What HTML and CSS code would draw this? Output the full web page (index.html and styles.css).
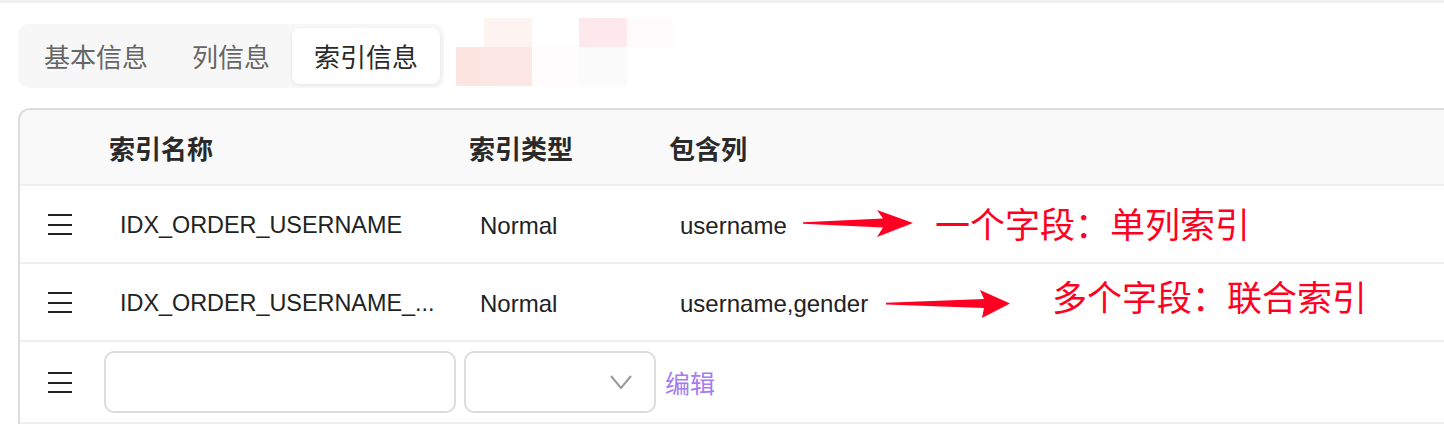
FILE: index.html
```html
<!DOCTYPE html>
<html lang="zh">
<head>
<meta charset="utf-8">
<title>索引信息</title>
<link rel="stylesheet" href="styles.css">
</head>
<body>
<div class="page">
  <div class="topline"></div>
  <div class="topbar">
    <div class="tabs">
      <div class="tab">基本信息</div>
      <div class="tab">列信息</div>
      <div class="tab active">索引信息</div>
    </div>
    <div class="mosaic">
      <span></span><span class="m1"></span><span></span><span class="m2"></span><span class="m3"></span>
      <span class="m4"></span><span class="m5"></span><span class="m6"></span><span class="m7"></span><span></span>
    </div>
  </div>

  <div class="table">
    <div class="row head">
      <div class="cell"></div>
      <div class="cell th">索引名称</div>
      <div class="cell th">索引类型</div>
      <div class="cell th">包含列</div>
    </div>
    <div class="row">
      <div class="cell handle"><svg class="menu" width="24" height="21" viewBox="0 0 24 21"><path d="M0 1h24M0 11h24M0 20h24" stroke="#222" stroke-width="2"/></svg></div>
      <div class="cell td name">IDX_ORDER_USERNAME</div>
      <div class="cell td">Normal</div>
      <div class="cell td">username</div>
    </div>
    <div class="row">
      <div class="cell handle"><svg class="menu" width="24" height="21" viewBox="0 0 24 21"><path d="M0 1h24M0 11h24M0 20h24" stroke="#222" stroke-width="2"/></svg></div>
      <div class="cell td name">IDX_ORDER_USERNAME_...</div>
      <div class="cell td">Normal</div>
      <div class="cell td">username,gender</div>
    </div>
    <div class="row edit">
      <div class="cell handle"><svg class="menu" width="24" height="21" viewBox="0 0 24 21"><path d="M0 1h24M0 11h24M0 20h24" stroke="#222" stroke-width="2"/></svg></div>
      <div class="cell field"><div class="input"></div></div>
      <div class="cell field"><div class="input select"><svg width="22" height="14" viewBox="0 0 22 14"><path d="M1 1l10 12 10-12" fill="none" stroke="#9a9a9a" stroke-width="2"/></svg></div></div>
      <div class="cell action"><span class="link">编辑</span></div>
    </div>
  </div>

  <svg class="arrow a1" width="112" height="32" viewBox="0 0 112 32"><polygon points="0,14.2 80,10.5 74,2 110,15 74,29 80,19.5 0,15.8" fill="#ff0022"/></svg>
  <div class="note n1">一个字段：单列索引</div>
  <svg class="arrow a2" width="126" height="32" viewBox="0 0 126 32"><polygon points="0,14.8 98,11 94,2 124,15.5 96,30 98,20 0,16.4" fill="#ff0022"/></svg>
  <div class="note n2">多个字段：联合索引</div>
</div>
</body>
</html>
```
FILE: styles.css
```css
html, body {
  margin: 0;
  padding: 0;
  overflow: hidden;
  background: #fff;
}

.page {
  position: relative;
  height: 436px;
  font-family: "Liberation Sans", "Noto Sans CJK SC", sans-serif;
}

.topline {
  height: 3px;
  background: #f1f1f1;
}

.topbar {
  display: flex;
  align-items: flex-start;
  padding: 15px 0 0 18px;
}

.tabs {
  display: flex;
  margin-top: 6px;
  padding: 4px;
  background: #f7f7f7;
  border-radius: 10px;
}

.tab {
  height: 56px;
  line-height: 56px;
  padding: 0 22px;
  font-family: "Noto Sans CJK SC", sans-serif;
  font-size: 26px;
  color: #666;
}

.tab.active {
  background: #fff;
  color: #2a2a2a;
  border-radius: 8px;
  box-shadow: 0 1px 4px rgba(0, 0, 0, 0.08);
}

.mosaic {
  display: grid;
  grid-template-columns: 28px 48px 47px 48px 47px;
  grid-template-rows: 29px 39px;
  margin-left: 12px;
}

.m1 { background: #fdf3f1; }
.m2 { background: #fde8ec; }
.m3 { background: #fffafb; }
.m4 { background: #fde6e1; }
.m5 { background: #fde7e4; }
.m6 { background: #fefcfc; }
.m7 { background: #fbfbfb; }

.table {
  margin: 20px -40px 0 18px;
  border-top: 2px solid #dcdcdc;
  border-left: 2px solid #dcdcdc;
  border-radius: 12px 0 0 0;
  overflow: hidden;
}

.row {
  display: grid;
  grid-template-columns: 80px 360px 200px 1fr;
  align-items: center;
  height: 76px;
  border-bottom: 2px solid #efefef;
}

.row.head {
  height: 74px;
  background: #f9f9f9;
}

.row.edit {
  height: 80px;
}

.cell {
  min-width: 0;
}

.th {
  padding-left: 9px;
  font-family: "Noto Sans CJK SC", sans-serif;
  font-weight: 700;
  font-size: 26px;
  color: #2a2a2a;
}

.td {
  padding: 3px 10px 0 20px;
  font-size: 24px;
  color: #222;
  white-space: nowrap;
}

.td.name {
  font-size: 23.4px;
}

.handle {
  display: flex;
  justify-content: center;
}

.menu {
  display: block;
}

.field {
  padding: 0 4px;
}

.input {
  box-sizing: border-box;
  height: 62px;
  border: 2px solid #dcdcdc;
  border-radius: 10px;
  background: #fff;
}

.select {
  display: flex;
  align-items: center;
  justify-content: flex-end;
  padding-right: 22px;
}

.select svg {
  display: block;
}

.action {
  padding-left: 5px;
}

.link {
  font-family: "Noto Sans CJK SC", sans-serif;
  font-size: 25px;
  color: #a57cf2;
}

.arrow {
  position: absolute;
  display: block;
}

.a1 { left: 803px; top: 208px; }
.a2 { left: 886px; top: 288px; }

.note {
  position: absolute;
  font-family: "Noto Sans CJK SC", sans-serif;
  font-size: 35px;
  line-height: 35px;
  color: #ff0022;
  white-space: nowrap;
}

.n1 { left: 935px; top: 205px; }
.n2 { left: 1052px; top: 278px; }
```
